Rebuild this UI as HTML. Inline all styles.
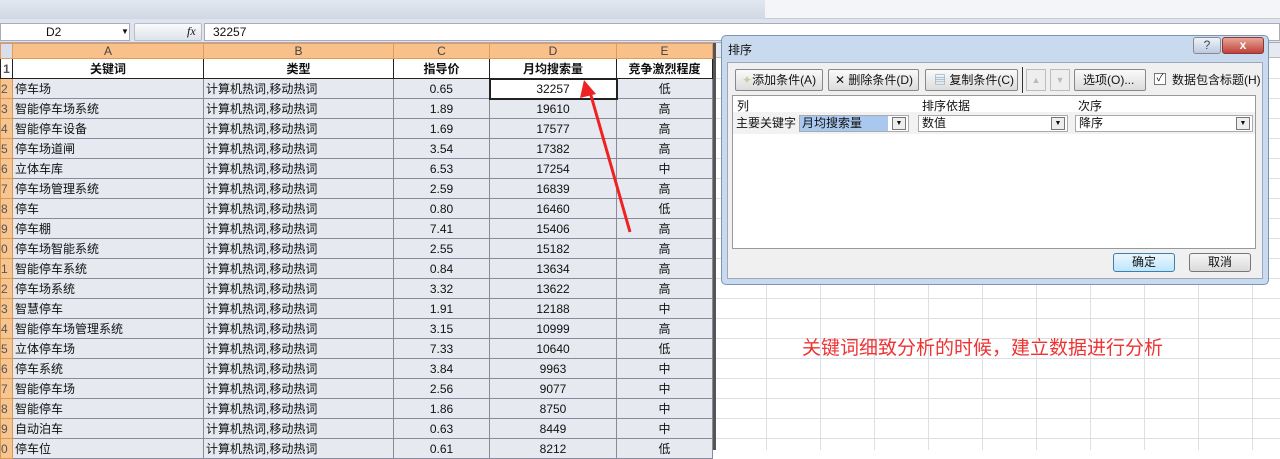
<!DOCTYPE html>
<html><head><meta charset="utf-8"><style>
*{margin:0;padding:0;box-sizing:border-box}
body{width:1280px;height:450px;overflow:hidden;position:relative;background:#fff;font-family:"Liberation Sans","Noto Sans CJK SC",sans-serif;font-size:12px;color:#111}
.abs{position:absolute}
table{border-collapse:collapse;position:absolute;left:0;top:43px;table-layout:fixed}
td{height:20px;border:1px solid #8a8a9a;padding:0 2px;white-space:nowrap;overflow:hidden;background:#e7e9f1}
td.rh{background:#f8c490;color:#555;text-align:left;padding:0;font-size:12px;border-color:#d79b55}
tr.ch td{background:#f9c08a;height:15px;text-align:center;color:#444;border-color:#e09a5a;font-size:12px}
tr.h td{background:#fff;font-weight:bold;text-align:center;border-color:#222;height:20px}
td.c{text-align:center}
</style></head><body>
<div class="abs" style="left:0;top:0;width:765px;height:19px;background:linear-gradient(#e2e8f1,#cfd8e4)"></div>
<div class="abs" style="left:765px;top:0;width:515px;height:19px;background:#f3f5f8;border-bottom:1px solid #ccc"></div>
<div class="abs" style="left:0;top:19px;width:1280px;height:24px;background:#dde4ee;border-bottom:1px solid #aab"></div>
<div class="abs" style="left:0;top:23px;width:130px;height:18px;background:#fff;border:1px solid #aab;padding-left:45px;line-height:16px">D2<span style="position:absolute;left:120px;font-size:8px">▼</span></div>
<div class="abs" style="left:134px;top:23px;width:68px;height:18px;background:linear-gradient(#fafbfc,#dde3ea);border:1px solid #bbc;border-radius:2px"><i style="position:absolute;left:52px;top:0;font-family:'Liberation Serif';font-size:12px">fx</i></div>
<div class="abs" style="left:204px;top:23px;width:1076px;height:18px;background:#fff;border:1px solid #aab;padding-left:8px;line-height:16px">32257</div>
<table>
<colgroup><col style="width:12px"><col style="width:191px"><col style="width:190px"><col style="width:96px"><col style="width:127px"><col style="width:96px"></colgroup>
<tr class="ch"><td style="background:#d9dfe8"></td><td>A</td><td>B</td><td>C</td><td>D</td><td>E</td></tr>
<tr class="h"><td class="rh">1</td><td>关键词</td><td>类型</td><td>指导价</td><td>月均搜索量</td><td>竞争激烈程度</td></tr>
<tr><td class="rh">2</td><td>停车场</td><td>计算机热词,移动热词</td><td class="c">0.65</td><td class="c" style="background:#fff;border:2px solid #222">32257</td><td class="c">低</td></tr>
<tr><td class="rh">3</td><td>智能停车场系统</td><td>计算机热词,移动热词</td><td class="c">1.89</td><td class="c">19610</td><td class="c">高</td></tr>
<tr><td class="rh">4</td><td>智能停车设备</td><td>计算机热词,移动热词</td><td class="c">1.69</td><td class="c">17577</td><td class="c">高</td></tr>
<tr><td class="rh">5</td><td>停车场道闸</td><td>计算机热词,移动热词</td><td class="c">3.54</td><td class="c">17382</td><td class="c">高</td></tr>
<tr><td class="rh">6</td><td>立体车库</td><td>计算机热词,移动热词</td><td class="c">6.53</td><td class="c">17254</td><td class="c">中</td></tr>
<tr><td class="rh">7</td><td>停车场管理系统</td><td>计算机热词,移动热词</td><td class="c">2.59</td><td class="c">16839</td><td class="c">高</td></tr>
<tr><td class="rh">8</td><td>停车</td><td>计算机热词,移动热词</td><td class="c">0.80</td><td class="c">16460</td><td class="c">低</td></tr>
<tr><td class="rh">9</td><td>停车棚</td><td>计算机热词,移动热词</td><td class="c">7.41</td><td class="c">15406</td><td class="c">高</td></tr>
<tr><td class="rh">0</td><td>停车场智能系统</td><td>计算机热词,移动热词</td><td class="c">2.55</td><td class="c">15182</td><td class="c">高</td></tr>
<tr><td class="rh">1</td><td>智能停车系统</td><td>计算机热词,移动热词</td><td class="c">0.84</td><td class="c">13634</td><td class="c">高</td></tr>
<tr><td class="rh">2</td><td>停车场系统</td><td>计算机热词,移动热词</td><td class="c">3.32</td><td class="c">13622</td><td class="c">高</td></tr>
<tr><td class="rh">3</td><td>智慧停车</td><td>计算机热词,移动热词</td><td class="c">1.91</td><td class="c">12188</td><td class="c">中</td></tr>
<tr><td class="rh">4</td><td>智能停车场管理系统</td><td>计算机热词,移动热词</td><td class="c">3.15</td><td class="c">10999</td><td class="c">高</td></tr>
<tr><td class="rh">5</td><td>立体停车场</td><td>计算机热词,移动热词</td><td class="c">7.33</td><td class="c">10640</td><td class="c">低</td></tr>
<tr><td class="rh">6</td><td>停车系统</td><td>计算机热词,移动热词</td><td class="c">3.84</td><td class="c">9963</td><td class="c">中</td></tr>
<tr><td class="rh">7</td><td>智能停车场</td><td>计算机热词,移动热词</td><td class="c">2.56</td><td class="c">9077</td><td class="c">中</td></tr>
<tr><td class="rh">8</td><td>智能停车</td><td>计算机热词,移动热词</td><td class="c">1.86</td><td class="c">8750</td><td class="c">中</td></tr>
<tr><td class="rh">9</td><td>自动泊车</td><td>计算机热词,移动热词</td><td class="c">0.63</td><td class="c">8449</td><td class="c">中</td></tr>
<tr><td class="rh">0</td><td>停车位</td><td>计算机热词,移动热词</td><td class="c">0.61</td><td class="c">8212</td><td class="c">低</td></tr>
</table>
<div class="abs" style="left:713px;top:43px;width:567px;height:15px;background:#e6eaf0;border-bottom:1px solid #bbb"></div>
<svg class="abs" style="left:713px;top:58px" width="567" height="392">
<g stroke="#dcdfe4" stroke-width="1">
<line x1="53.5" y1="0" x2="53.5" y2="392"/><line x1="107.5" y1="0" x2="107.5" y2="392"/><line x1="161.5" y1="0" x2="161.5" y2="392"/><line x1="215.5" y1="0" x2="215.5" y2="392"/><line x1="269.5" y1="0" x2="269.5" y2="392"/><line x1="323.5" y1="0" x2="323.5" y2="392"/><line x1="377.5" y1="0" x2="377.5" y2="392"/><line x1="431.5" y1="0" x2="431.5" y2="392"/><line x1="485.5" y1="0" x2="485.5" y2="392"/><line x1="539.5" y1="0" x2="539.5" y2="392"/>
</g>
<g stroke="#dcdfe4">
<line x1="0" y1="20.5" x2="567" y2="20.5"/><line x1="0" y1="40.5" x2="567" y2="40.5"/><line x1="0" y1="60.5" x2="567" y2="60.5"/><line x1="0" y1="80.5" x2="567" y2="80.5"/><line x1="0" y1="100.5" x2="567" y2="100.5"/><line x1="0" y1="120.5" x2="567" y2="120.5"/><line x1="0" y1="140.5" x2="567" y2="140.5"/><line x1="0" y1="160.5" x2="567" y2="160.5"/><line x1="0" y1="180.5" x2="567" y2="180.5"/><line x1="0" y1="200.5" x2="567" y2="200.5"/><line x1="0" y1="220.5" x2="567" y2="220.5"/><line x1="0" y1="240.5" x2="567" y2="240.5"/><line x1="0" y1="260.5" x2="567" y2="260.5"/><line x1="0" y1="280.5" x2="567" y2="280.5"/><line x1="0" y1="300.5" x2="567" y2="300.5"/><line x1="0" y1="320.5" x2="567" y2="320.5"/><line x1="0" y1="340.5" x2="567" y2="340.5"/><line x1="0" y1="360.5" x2="567" y2="360.5"/><line x1="0" y1="380.5" x2="567" y2="380.5"/>
</g></svg>
<div class="abs" style="left:713px;top:43px;width:3px;height:407px;background:#555"></div>
<div class="abs" style="left:721px;top:35px;width:548px;height:250px;background:#c9daee;border:1px solid #7d95b5;border-radius:5px"></div>
<div class="abs" style="left:728px;top:41px;font-size:12px">排序</div>
<div class="abs" style="left:1193px;top:37px;width:28px;height:17px;background:linear-gradient(#eef3f9,#bccbdd);border:1px solid #889;border-radius:3px;text-align:center;font-size:12px;color:#445">?</div>
<div class="abs" style="left:1222px;top:37px;width:42px;height:17px;background:linear-gradient(#e8a598,#c0413a);border:1px solid #8a3a35;border-radius:3px;text-align:center;color:#fff;font-weight:bold;font-size:12px">x</div>
<div class="abs" style="left:727px;top:62px;width:536px;height:217px;background:#f0f0f0;border:1px solid #9aaabb"></div>
<div class="abs" style="left:735px;top:69px;width:88px;height:22px;border:1px solid #888;border-radius:2px;background:linear-gradient(#fafafa,#dcdcdc);line-height:20px;padding-left:6px"><span style="color:#cc9">✦</span>添加条件(A)</div>
<div class="abs" style="left:828px;top:69px;width:91px;height:22px;border:1px solid #888;border-radius:2px;background:linear-gradient(#fafafa,#dcdcdc);line-height:20px;padding-left:6px">✕ 删除条件(D)</div>
<div class="abs" style="left:925px;top:69px;width:93px;height:22px;border:1px solid #888;border-radius:2px;background:linear-gradient(#fafafa,#dcdcdc);line-height:20px;padding-left:8px"><span style="color:#69c">▤</span> 复制条件(C)</div>
<div class="abs" style="left:1022px;top:67px;width:1px;height:26px;background:#333"></div>
<div class="abs" style="left:1026px;top:69px;width:20px;height:22px;border:1px solid #bbb;background:#eee;color:#bbb;text-align:center;font-size:9px;line-height:20px">▲</div>
<div class="abs" style="left:1050px;top:69px;width:20px;height:22px;border:1px solid #bbb;background:#eee;color:#bbb;text-align:center;font-size:9px;line-height:20px">▼</div>
<div class="abs" style="left:1074px;top:69px;width:72px;height:22px;border:1px solid #888;border-radius:2px;background:linear-gradient(#fafafa,#dcdcdc);line-height:20px;padding-left:8px">选项(O)...</div>
<div class="abs" style="left:1154px;top:73px;width:12px;height:12px;border:1px solid #777;background:#fff;font-size:10px;line-height:10px;text-align:center">✓</div>
<div class="abs" style="left:1172px;top:71px">数据包含标题(H)</div>
<div class="abs" style="left:732px;top:95px;width:524px;height:154px;background:#fff;border:1px solid #999"></div>
<div class="abs" style="left:737px;top:97px">列</div>
<div class="abs" style="left:922px;top:97px">排序依据</div>
<div class="abs" style="left:1078px;top:97px">次序</div>
<div class="abs" style="left:733px;top:112px;width:522px;height:22px;background:#f2f2f2"></div>
<div class="abs" style="left:736px;top:114px">主要关键字</div>
<div class="abs" style="left:799px;top:115px;width:110px;height:17px;border:1px solid #aaa;background:#fff"><span style="background:#a9c8ef;padding:0 2px;display:inline-block;line-height:15px;width:88px">月均搜索量</span></div>
<div class="abs" style="left:918px;top:115px;width:150px;height:17px;border:1px solid #aaa;background:#fff;padding-left:3px;line-height:15px">数值</div>
<div class="abs" style="left:1075px;top:115px;width:178px;height:17px;border:1px solid #aaa;background:#fff;padding-left:3px;line-height:15px">降序</div>
<div class="abs" style="left:892px;top:117px;width:14px;height:13px;border:1px solid #777;background:#eee;font-size:7px;text-align:center;line-height:12px">▼</div>
<div class="abs" style="left:1051px;top:117px;width:14px;height:13px;border:1px solid #777;background:#eee;font-size:7px;text-align:center;line-height:12px">▼</div>
<div class="abs" style="left:1236px;top:117px;width:14px;height:13px;border:1px solid #777;background:#eee;font-size:7px;text-align:center;line-height:12px">▼</div>
<div class="abs" style="left:1113px;top:253px;width:62px;height:19px;border:1px solid #3c7fb1;border-radius:3px;background:linear-gradient(#eaf6fd,#bee6fd);text-align:center;line-height:17px">确定</div>
<div class="abs" style="left:1189px;top:253px;width:62px;height:19px;border:1px solid #777;border-radius:3px;background:linear-gradient(#f6f6f6,#dadada);text-align:center;line-height:17px">取消</div>
<div class="abs" style="left:802px;top:333px;color:#e33;font-size:19px;white-space:nowrap">关键词细致分析的时候，建立数据进行分析</div>
<svg class="abs" style="left:0;top:0" width="1280" height="450"><path d="M630 232 L590 92" stroke="#ee2222" stroke-width="3"/><path d="M584 80 L580 98 L596 94 Z" fill="#ee2222"/></svg>
</body></html>
